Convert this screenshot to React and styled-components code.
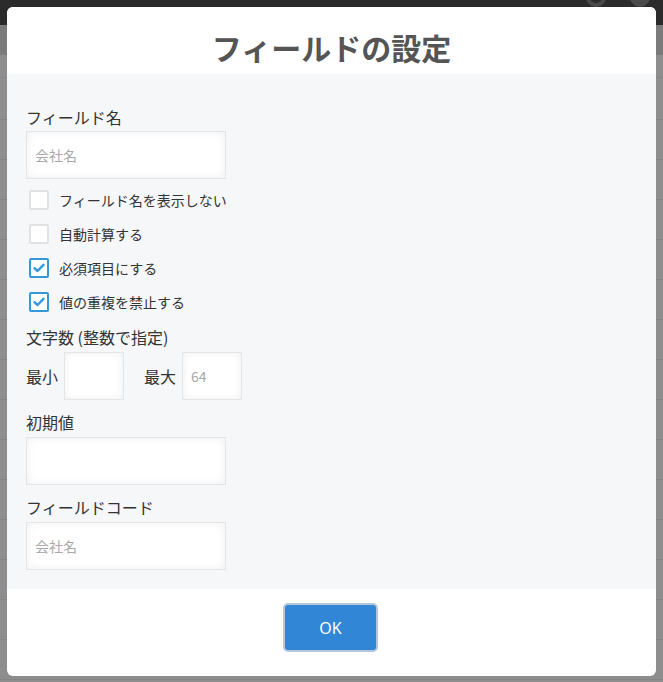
import React from 'react';
import styled, { createGlobalStyle } from 'styled-components';

const GlobalStyle = createGlobalStyle`
  html, body {
    margin: 0;
    padding: 0;
  }
  body {
    font-family: "Noto Sans CJK JP", "Noto Sans", sans-serif;
    background-color: #8e8e8e;
    background-image:
      linear-gradient(#2b2b2b, #2b2b2b),
      linear-gradient(#7b7b7b, #7b7b7b),
      repeating-linear-gradient(
        to bottom,
        transparent 0,
        transparent 39px,
        #858585 39px,
        #858585 40px
      );
    background-size: 100% 25px, 100% 30px, 100% 100%;
    background-position: 0 0, 0 25px, 0 80px;
    background-repeat: no-repeat, no-repeat, repeat;
    min-height: 682px;
  }
`;

const Backdrop = styled.div`
  position: relative;
  padding: 7px;
  height: 682px;
  box-sizing: border-box;
`;

const TopIcons = styled.div`
  position: absolute;
  top: -14px;
  right: 12px;
  display: flex;
  gap: 22px;
  color: #4a4a4a;
`;

const Modal = styled.div`
  position: relative;
  width: 649px;
  height: 669px;
  display: flex;
  flex-direction: column;
  background: #fff;
  border-radius: 6px;
  overflow: hidden;
`;

const Header = styled.div`
  height: 67px;
  display: flex;
  align-items: center;
  justify-content: center;
  background: #fff;
`;

const Title = styled.h1`
  margin: 0;
  padding-top: 12px;
  font-size: 30px;
  font-weight: 700;
  color: #555;
  letter-spacing: 0;
`;

const Body = styled.div`
  flex: 1;
  background: #f6f7f9;
  padding: 31px 19px 19px;
  display: flex;
  flex-direction: column;
`;

const Label = styled.div`
  font-size: 16px;
  line-height: 24px;
  color: #333;
  margin-bottom: ${(p) => p.gap || 2}px;
`;

const Input = styled.input`
  box-sizing: border-box;
  width: ${(p) => p.width || 200}px;
  height: 48px;
  border: 1px solid #e3e5e7;
  background: #fff;
  box-shadow: inset 0 0 8px rgba(0, 0, 0, 0.07);
  padding: 0 8px;
  font-family: inherit;
  font-size: 14px;
  color: #333;
  outline: none;
  &::placeholder {
    color: #a8a8a8;
  }
`;

const Group = styled.div`
  display: flex;
  flex-direction: column;
  align-items: flex-start;
  margin-top: ${(p) => p.top || 0}px;
`;

const CheckList = styled.div`
  display: flex;
  flex-direction: column;
  margin-top: 4px;
`;

const CheckRow = styled.label`
  display: flex;
  align-items: center;
  height: 34px;
  padding-left: 3px;
  gap: 10px;
  font-size: 14px;
  color: #333;
`;

const Box = styled.span`
  box-sizing: border-box;
  width: 20px;
  height: 20px;
  border: 2px solid ${(p) => (p.checked ? '#3498db' : '#e2e2e2')};
  border-radius: 2px;
  background: #fff;
  display: flex;
  align-items: center;
  justify-content: center;
`;

const RangeRow = styled.div`
  display: flex;
  align-items: center;
`;

const RangeLabel = styled.span`
  font-size: 16px;
  color: #333;
  margin-right: 6px;
  margin-left: ${(p) => p.left || 0}px;
`;

const Footer = styled.div`
  height: 87px;
  display: flex;
  justify-content: center;
  padding-top: 14px;
  box-sizing: border-box;
`;

const OkButton = styled.button`
  width: 95px;
  height: 49px;
  margin-left: -2px;
  background: #3286d6;
  border: 2px solid #b3c8dc;
  border-radius: 5px;
  color: #fff;
  font-family: "Noto Sans", sans-serif;
  font-size: 16px;
  cursor: pointer;
`;

const Check = ({ checked, children }) => (
  <CheckRow>
    <Box checked={checked}>
      {checked && (
        <svg width="12" height="10" viewBox="0 0 12 10">
          <path d="M1.5 5.2 L4.5 8 L10.5 1.8" fill="none" stroke="#3498db" strokeWidth="2.4" strokeLinecap="round" strokeLinejoin="round" />
        </svg>
      )}
    </Box>
    {children}
  </CheckRow>
);

const App = () => (
  <>
    <GlobalStyle />
    <Backdrop>
      <TopIcons>
        <svg width="22" height="22" viewBox="0 0 22 22">
          <circle cx="11" cy="11" r="8" fill="none" stroke="currentColor" strokeWidth="4" />
        </svg>
        <svg width="22" height="22" viewBox="0 0 22 22">
          <circle cx="11" cy="11" r="10" fill="currentColor" />
        </svg>
      </TopIcons>
      <Modal>
        <Header>
          <Title>フィールドの設定</Title>
        </Header>
        <Body>
          <Group>
            <Label>フィールド名</Label>
            <Input placeholder="会社名" />
          </Group>
          <CheckList>
            <Check>フィールド名を表示しない</Check>
            <Check>自動計算する</Check>
            <Check checked>必須項目にする</Check>
            <Check checked>値の重複を禁止する</Check>
          </CheckList>
          <Group top={6}>
            <Label gap={3}>文字数 (整数で指定)</Label>
            <RangeRow>
              <RangeLabel>最小</RangeLabel>
              <Input width={60} />
              <RangeLabel left={20}>最大</RangeLabel>
              <Input width={60} placeholder="64" />
            </RangeRow>
          </Group>
          <Group top={10}>
            <Label gap={3}>初期値</Label>
            <Input />
          </Group>
          <Group top={10}>
            <Label gap={3}>フィールドコード</Label>
            <Input placeholder="会社名" />
          </Group>
        </Body>
        <Footer>
          <OkButton>OK</OkButton>
        </Footer>
      </Modal>
    </Backdrop>
  </>
);

export default App;
